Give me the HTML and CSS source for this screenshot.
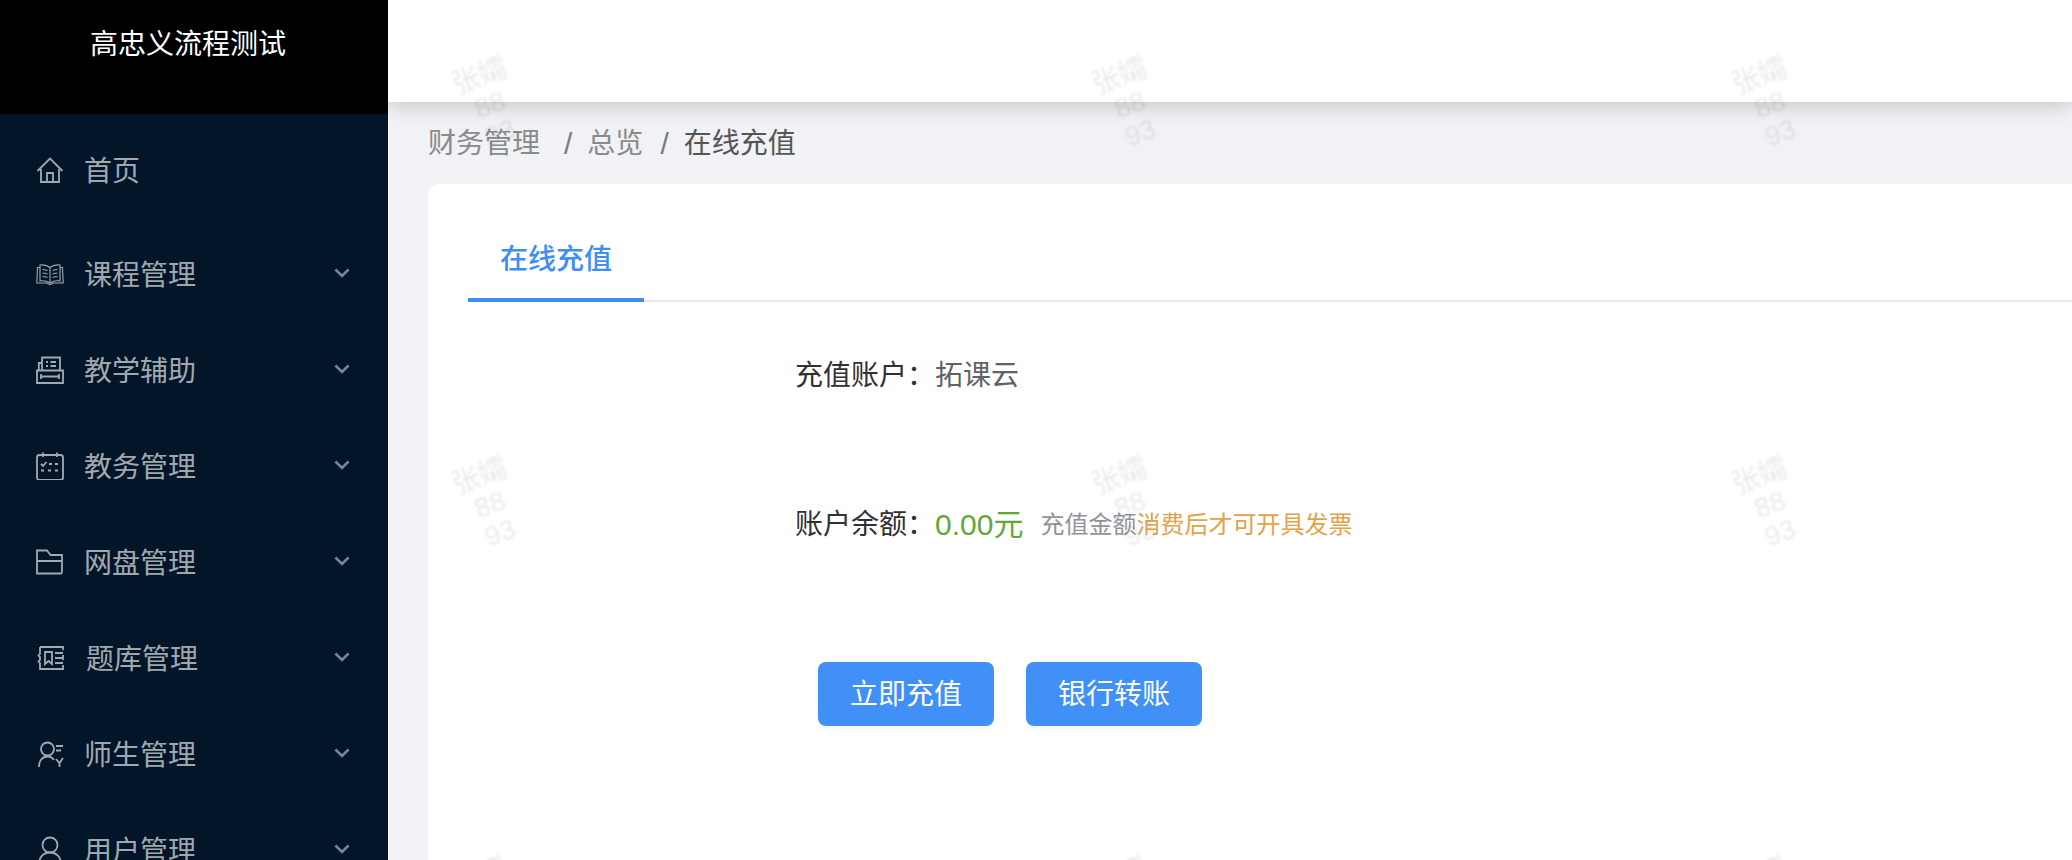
FILE: index.html
```html
<!DOCTYPE html>
<html lang="zh-CN">
<head>
    <meta charset="UTF-8">
    <title>在线充值</title>
    <link rel="stylesheet" href="styles.css">
</head>
<body>
    <div class="app">
        <aside class="sidebar">
            <div class="logo">高忠义流程测试</div>
            <nav class="menu">
                <a class="menu-item menu-home">
                    <svg class="menu-icon" viewBox="0 0 28 28"><path d="M1.500 15 14 2.500 26.500 15M5 13v13h18V13M11 26v-9h6v9"/></svg>
                    <span class="menu-label">首页</span>
                </a>
                <a class="menu-item">
                    <svg class="menu-icon thin" viewBox="0 0 28 28"><path d="M14 7.500C11 5 7.500 4.500 4 5v16c3.500-.5 7 0 10 2 3-2 6.500-2.500 10-2V5c-3.500-.5-7 0-10 2.500v15.500M4 7.500H1.500L.8 23h10l3.200 1.700 3.200-1.700h10L26.500 7.500H24M6.500 9.500c1.500 0 3 .3 5 1M6.500 13c1.500 0 3 .3 5 1M6.500 16.500c1.500 0 3 .3 5 1M21.500 9.500c-1.500 0-3 .3-5 1M21.500 13c-1.500 0-3 .3-5 1M21.500 16.500c-1.500 0-3 .3-5 1"/></svg>
                    <span class="menu-label">课程管理</span>
                    <svg class="menu-arrow" viewBox="0 0 16 10"><path d="M1.500 1.500 8 8l6.500-6.500"/></svg>
                </a>
                <a class="menu-item">
                    <svg class="menu-icon" viewBox="0 0 28 28"><path d="M1 14.500h26V27H1zM6 14.500V1.500h18v13M6 7H2.800v7.500M5 20.500h18M5 18v5M23 18v5M10 6h2M14.500 6H20M10 10h2M14.500 10H20"/></svg>
                    <span class="menu-label">教学辅助</span>
                    <svg class="menu-arrow" viewBox="0 0 16 10"><path d="M1.500 1.500 8 8l6.500-6.500"/></svg>
                </a>
                <a class="menu-item">
                    <svg class="menu-icon" viewBox="0 0 28 28"><rect x="1" y="3" width="26" height="25" rx="2.500"/><path d="M7 .5V5M21 .5V5M5 12l2 2 3.500-4M13 12h3M19 12h3M5 18.500h3M12 18.500h3M19 18.500h3"/></svg>
                    <span class="menu-label">教务管理</span>
                    <svg class="menu-arrow" viewBox="0 0 16 10"><path d="M1.500 1.500 8 8l6.500-6.500"/></svg>
                </a>
                <a class="menu-item">
                    <svg class="menu-icon" viewBox="0 0 28 28"><path d="M26 25V7H14.500L11 2.500H1V25.500h25M1 13h25"/></svg>
                    <span class="menu-label">网盘管理</span>
                    <svg class="menu-arrow" viewBox="0 0 16 10"><path d="M1.500 1.500 8 8l6.500-6.500"/></svg>
                </a>
                <a class="menu-item menu-shift">
                    <svg class="menu-icon" viewBox="0 0 28 28"><path d="M4 3h23v3M27 11v5M27 21v4H4v-6l-1.500-1.500L4 16v-3l-1.500-1.500L4 10V3M9 8v12l3.500-3 3.500 3V8zM19 9h8M19 14h8M19 19h8"/></svg>
                    <span class="menu-label">题库管理</span>
                    <svg class="menu-arrow" viewBox="0 0 16 10"><path d="M1.500 1.500 8 8l6.500-6.500"/></svg>
                </a>
                <a class="menu-item">
                    <svg class="menu-icon" viewBox="0 0 28 28"><circle cx="11.500" cy="9" r="6.500"/><path d="M3 27c0-6 3-10.500 8.500-10.500 3 0 5 1.200 6.500 3.500M20 6h7M20 10.500h5M20 19l3.500 4 3.500-5M23.500 23v4"/></svg>
                    <span class="menu-label">师生管理</span>
                    <svg class="menu-arrow" viewBox="0 0 16 10"><path d="M1.500 1.500 8 8l6.500-6.500"/></svg>
                </a>
                <a class="menu-item">
                    <svg class="menu-icon" viewBox="0 0 28 28"><circle cx="14" cy="9" r="7.500"/><path d="M3 28c0-7 4.500-11.500 11-11.500S25 21 25 28"/></svg>
                    <span class="menu-label">用户管理</span>
                    <svg class="menu-arrow" viewBox="0 0 16 10"><path d="M1.500 1.500 8 8l6.500-6.500"/></svg>
                </a>
            </nav>
        </aside>

        <main class="main">
            <header class="topbar"></header>

            <div class="breadcrumb">
                <span>财务管理</span>
                <i class="sep first">/</i>
                <span>总览</span>
                <i class="sep second">/</i>
                <span class="current">在线充值</span>
            </div>

            <section class="card">
                <div class="tabs">
                    <div class="tab active">在线充值</div>
                </div>
                <div class="form">
                    <div class="form-row row-account">
                        <span class="form-label">充值账户：</span>
                        <span class="account-name">拓课云</span>
                    </div>
                    <div class="form-row row-balance">
                        <span class="form-label">账户余额：</span>
                        <span class="balance">0.00元</span>
                        <span class="tip">充值金额<em>消费后才可开具发票</em></span>
                    </div>
                    <div class="actions">
                        <button class="btn">立即充值</button>
                        <button class="btn">银行转账</button>
                    </div>
                </div>
            </section>

            <div class="watermarks">
                <div class="watermark">张孀<br>88<br>93</div>
                <div class="watermark">张孀<br>88<br>93</div>
                <div class="watermark">张孀<br>88<br>93</div>
                <div class="watermark">张孀<br>88<br>93</div>
                <div class="watermark">张孀<br>88<br>93</div>
                <div class="watermark">张孀<br>88<br>93</div>
                <div class="watermark">张孀<br>88<br>93</div>
                <div class="watermark">张孀<br>88<br>93</div>
                <div class="watermark">张孀<br>88<br>93</div>
            </div>
        </main>
    </div>
</body>
</html>
```

FILE: styles.css
```css
* {
    box-sizing: border-box;
}

html, body {
    margin: 0;
    height: 100%;
    overflow: hidden;
}

body {
    background-color: #f0f2f5;
    font-family: "Liberation Sans", "Noto Sans CJK SC", sans-serif;
    font-size: 28px;
}

.app {
    display: flex;
    height: 860px;
}

/* sidebar */
.sidebar {
    width: 388px;
    flex-shrink: 0;
    background-color: #021529;
    overflow: hidden;
}

.logo {
    height: 114px;
    padding: 25px 12px 0 0;
    background-color: #000;
    color: #fff;
    line-height: 40px;
    text-align: center;
}

.menu-item {
    display: flex;
    align-items: center;
    height: 96px;
    padding: 0 36px;
    color: rgba(255, 255, 255, 0.65);
}

.menu-home {
    height: 112px;
}

.menu-icon {
    width: 28px;
    height: 28px;
    margin-right: 20px;
    flex-shrink: 0;
    fill: none;
    stroke: #a3a9b2;
    stroke-width: 1.8;
}

.menu-icon.thin {
    stroke-width: 1.1;
}

.menu-label {
    flex: 1;
    padding-top: 3px;
    line-height: 40px;
}

.menu-shift .menu-label {
    margin-left: 2px;
}

.menu-arrow {
    width: 16px;
    height: 10px;
    margin: -3px 2px 0 0;
    fill: none;
    stroke: #7c8591;
    stroke-width: 2.6;
}

/* main */
.main {
    position: relative;
    flex: 1;
    min-width: 0;
    overflow: hidden;
}

.topbar {
    height: 102px;
    background-color: #fff;
    box-shadow: 0 3px 20px rgba(0, 0, 0, 0.2);
}

.breadcrumb {
    display: flex;
    align-items: center;
    height: 82px;
    padding: 2px 0 0 40px;
    color: #8a8a8a;
    line-height: 80px;
}

.breadcrumb .current {
    color: #555;
}

.sep {
    font-size: 30px;
    font-style: normal;
    color: #7a7a7a;
}

.sep.first {
    margin: 0 15px 0 24px;
}

.sep.second {
    margin: 0 15px 0 17px;
}

.card {
    height: 700px;
    margin-left: 40px;
    padding: 56px 0 0 40px;
    background-color: #fff;
    border-radius: 12px 0 0 0;
}

.tabs {
    height: 62px;
    border-bottom: 2px solid #e4e7ed;
}

.tab {
    width: 176px;
    height: 62px;
    line-height: 40px;
    text-align: center;
}

.tab.active {
    color: #3d8ef8;
    font-weight: 500;
    border-bottom: 4px solid #3d8ef8;
}

.form {
    padding: 51px 0 0 327px;
}

.form-row {
    display: flex;
    align-items: center;
    height: 40px;
}

.form-label {
    width: 140px;
    color: #303133;
}

.account-name {
    color: #606266;
}

.row-balance {
    margin-top: 109px;
}

.balance {
    margin-right: 17px;
    color: #5fa838;
    font-size: 30px;
}

.tip {
    color: #909399;
    font-size: 24px;
}

.tip em {
    color: #e2a24a;
    font-style: normal;
}

.actions {
    display: flex;
    gap: 32px;
    margin: 120px 0 0 23px;
}

.btn {
    width: 176px;
    height: 64px;
    padding: 0 0 4px;
    border: none;
    border-radius: 8px;
    background-color: #4090f7;
    box-shadow: 0 4px 4px rgba(0, 0, 0, 0.04);
    color: #fff;
    font-family: inherit;
    font-size: 28px;
}

/* watermark grid, sits over the whole main area */
.watermarks {
    position: absolute;
    top: -95px;
    left: -218px;
    display: grid;
    grid-template-columns: repeat(3, 640px);
    grid-auto-rows: 400px;
    pointer-events: none;
}

.watermark {
    align-self: center;
    justify-self: center;
    color: rgba(0, 0, 0, 0.085);
    font-size: 28px;
    line-height: 30px;
    text-align: center;
    transform: rotate(-20deg);
    filter: blur(0.8px);
}
```
